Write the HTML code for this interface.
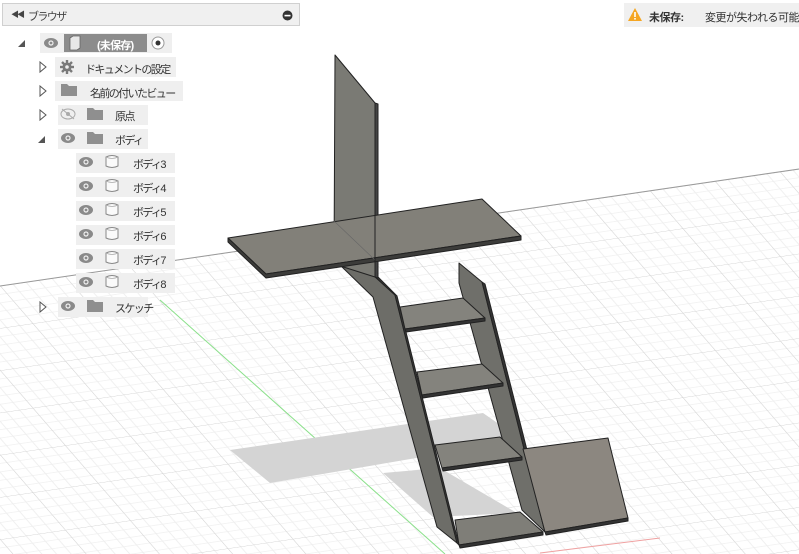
<!DOCTYPE html>
<html><head><meta charset="utf-8"><style>
body{margin:0;width:799px;height:554px;overflow:hidden;background:#fff;font-family:"Liberation Sans","Noto Sans CJK JP",sans-serif;font-size:11px;color:#333;position:relative}
svg.bg{position:absolute;left:0;top:0}
.hdr{position:absolute;left:2px;top:3px;width:298px;height:23px;background:#f0f0f0;border:1px solid #d0d0d0;box-sizing:border-box}
.row{position:absolute;height:20px;background:#efefef}
.t{position:absolute;top:3px;white-space:nowrap;letter-spacing:-1.6px}
</style></head><body>
<svg class="bg" width="799" height="554" viewBox="0 0 799 554">
<defs>
<pattern id="g" width="5" height="5" patternUnits="userSpaceOnUse" patternTransform="matrix(13 -1.9 6.5 7.5 0 286)">
<path d="M1 0V5M2 0V5M3 0V5M4 0V5M0 1H5M0 2H5M0 3H5M0 4H5" stroke="#eeeeee" stroke-width="0.08" fill="none"/>
<path d="M0 0V5M0 0H5" stroke="#d2d2d2" stroke-width="0.1" fill="none"/>
</pattern>
<clipPath id="c"><polygon points="0,286 799,169 799,554 0,554"/></clipPath>
</defs>
<rect x="0" y="0" width="799" height="554" fill="url(#g)" clip-path="url(#c)"/>
<line x1="0" y1="286" x2="799" y2="169" stroke="#999" stroke-width="1"/>
<line x1="160" y1="300" x2="445" y2="554" stroke="#8be08b" stroke-width="1"/>
<line x1="540" y1="553" x2="660" y2="538" stroke="#f0a0a0" stroke-width="1"/>
<polygon points="230,450 483,413 522,440 270,483" fill="#d4d4d4"/>
<polygon points="383,473 440,468 517,513 433,517" fill="#d4d4d4"/>
<g stroke="#222" stroke-width="1" stroke-linejoin="round">
<polygon points="340,265 373,275 395,295 457,543 437,527 373,297" fill="#6d6d68"/>
<polygon points="373,275 395,295 457,543 459,545 397,296 376,275" fill="#3a3a38"/>
<polygon points="335,55 375,103 375,277 334,264" fill="#7a7a74"/>
<polygon points="375,103 378,104 378,278 375,277" fill="#444"/>
<polygon points="228,238 482,199 521,236 266,274" fill="#828079"/>
<polygon points="228,238 266,274 521,236 521,240 266,278 228,242" fill="#3c3c3a"/>
<line x1="334" y1="221" x2="375" y2="260" stroke="#666" stroke-width="0.6"/>
<line x1="375" y1="215" x2="375" y2="277"/>
<polygon points="459,263 482,282 545,532 522,510 459,283" fill="#6f6f6a"/>
<polygon points="482,282 485,284 548,533 545,532" fill="#333"/>
<polygon points="400,307 463,298 485,318 405,329" fill="#84837d"/>
<polygon points="405,329 485,318 485,321 406,332" fill="#333"/>
<polygon points="417,372 482,364 503,383 422,395" fill="#84837d"/>
<polygon points="422,395 503,383 503,386 423,398" fill="#333"/>
<polygon points="435,445 500,437 522,457 442,468" fill="#84837d"/>
<polygon points="442,468 522,457 522,460 443,471" fill="#333"/>
<polygon points="455,520 520,512 543,532 459,545" fill="#7f7e78"/>
<polygon points="459,545 543,532 543,535 460,548" fill="#333"/>
<polygon points="523,449 608,438 628,518 545,532" fill="#8c8780"/>
<polygon points="545,532 628,518 628,521 546,535" fill="#333"/>
</g>
</svg>

<div class="hdr"><span class="t" style="left:8px;top:5px;font-size:8px;color:#444;letter-spacing:-2px">◀◀</span><span class="t" style="left:25px;top:4px;color:#444">ブラウザ</span>
<svg style="position:absolute;left:279px;top:6px" width="11" height="11"><circle cx="5.5" cy="5.5" r="5" fill="#333"/><rect x="2.5" y="4.8" width="6" height="1.6" fill="#fff"/></svg></div>

<div style="position:absolute;left:624px;top:3px;width:175px;height:24px;background:#f0f0f0"></div>
<svg style="position:absolute;left:627px;top:7px" width="16" height="15"><polygon points="8,1 15,14 1,14" fill="#f5a623"/><rect x="7.2" y="5" width="1.6" height="5" fill="#fff"/><rect x="7.2" y="11" width="1.6" height="1.6" fill="#fff"/></svg>
<span class="t" style="left:649px;top:9px;font-weight:bold;color:#333;letter-spacing:-0.5px">未保存:</span>
<span class="t" style="left:705px;top:9px;color:#333;letter-spacing:-0.5px">変更が失われる可能性</span>

<svg style="position:absolute;left:0;top:0" width="300" height="330">
<g fill="#555">
<polygon points="18,47 25,40 25,47" />
<polygon points="38,143 45,136 45,143"/>
</g>
<g fill="none" stroke="#555" stroke-width="1">
<polygon points="40,62 46,67 40,72"/><polygon points="40,86 46,91 40,96"/><polygon points="40,110 46,115 40,120"/><polygon points="40,302 46,307 40,312"/>
</g>
</svg>

<div class="row" style="left:40px;top:33px;width:132px"></div>
<div style="position:absolute;left:64px;top:34px;width:83px;height:18px;background:#8c8c8c"></div>
<span class="t" style="left:97px;top:37px;color:#fff;font-weight:bold;letter-spacing:-0.8px">(未保存)</span>
<div class="row" style="left:55px;top:57px;width:121px"></div><span class="t" style="left:85px;top:61px">ドキュメントの設定</span>
<div class="row" style="left:55px;top:81px;width:128px"></div><span class="t" style="left:90px;top:85px">名前の付いたビュー</span>
<div class="row" style="left:58px;top:105px;width:90px"></div><span class="t" style="left:115px;top:108px">原点</span>
<div class="row" style="left:58px;top:129px;width:90px"></div><span class="t" style="left:115px;top:132px">ボディ</span>
<div class="row" style="left:76px;top:153px;width:99px"></div><span class="t" style="left:133px;top:156px">ボディ3</span>
<div class="row" style="left:76px;top:177px;width:99px"></div><span class="t" style="left:133px;top:180px">ボディ4</span>
<div class="row" style="left:76px;top:201px;width:99px"></div><span class="t" style="left:133px;top:204px">ボディ5</span>
<div class="row" style="left:76px;top:225px;width:99px"></div><span class="t" style="left:133px;top:228px">ボディ6</span>
<div class="row" style="left:76px;top:249px;width:99px"></div><span class="t" style="left:133px;top:252px">ボディ7</span>
<div class="row" style="left:76px;top:273px;width:99px"></div><span class="t" style="left:133px;top:276px">ボディ8</span>
<div class="row" style="left:58px;top:297px;width:90px"></div><span class="t" style="left:115px;top:300px">スケッチ</span>

<svg style="position:absolute;left:0;top:0" width="300" height="330">
<defs>
<g id="eye"><ellipse cx="0" cy="0" rx="7" ry="5" fill="#8a8a8a"/><circle cx="0" cy="0" r="2.6" fill="#efefef"/><circle cx="0" cy="0" r="1.4" fill="#8a8a8a"/></g>
<g id="fold"><path d="M-8,-6 h6 l2,2 h8 v10 h-16z" fill="#8f8f8f"/></g>
<g id="body"><path d="M-6,-5 q6,-3 12,0 v9 q-6,3 -12,0z" fill="#fafafa" stroke="#888" stroke-width="1"/><path d="M-6,-5 q6,3 12,0" fill="none" stroke="#aaa" stroke-width="0.8"/></g>
</defs>
<use href="#eye" x="51" y="43"/>
<path d="M70,38 l3,-2 h7 v12 l-3,2 h-7z" fill="#e8e8e8" stroke="#666" stroke-width="0.8"/>
<circle cx="158" cy="43" r="6" fill="#fff" stroke="#999"/><circle cx="158" cy="43" r="2.5" fill="#333"/>
<g transform="translate(67,67)" fill="#7a7a7a"><circle r="4.5"/><g stroke="#7a7a7a" stroke-width="2.4"><line x1="0" y1="-7" x2="0" y2="7"/><line x1="-7" y1="0" x2="7" y2="0"/><line x1="-5" y1="-5" x2="5" y2="5"/><line x1="-5" y1="5" x2="5" y2="-5"/></g><circle r="1.8" fill="#efefef"/></g>
<use href="#fold" x="69" y="90"/>
<g transform="translate(68,114)"><ellipse rx="7" ry="5" fill="none" stroke="#aaa"/><circle r="2" fill="#aaa"/><line x1="-6" y1="-5" x2="6" y2="5" stroke="#aaa"/></g>
<use href="#fold" x="95" y="114"/>
<use href="#eye" x="68" y="138"/><use href="#fold" x="95" y="138"/>
<use href="#eye" x="86" y="162"/><use href="#body" x="112" y="162"/>
<use href="#eye" x="86" y="186"/><use href="#body" x="112" y="186"/>
<use href="#eye" x="86" y="210"/><use href="#body" x="112" y="210"/>
<use href="#eye" x="86" y="234"/><use href="#body" x="112" y="234"/>
<use href="#eye" x="86" y="258"/><use href="#body" x="112" y="258"/>
<use href="#eye" x="86" y="282"/><use href="#body" x="112" y="282"/>
<use href="#eye" x="68" y="306"/><use href="#fold" x="95" y="306"/>
</svg>
</body></html>
